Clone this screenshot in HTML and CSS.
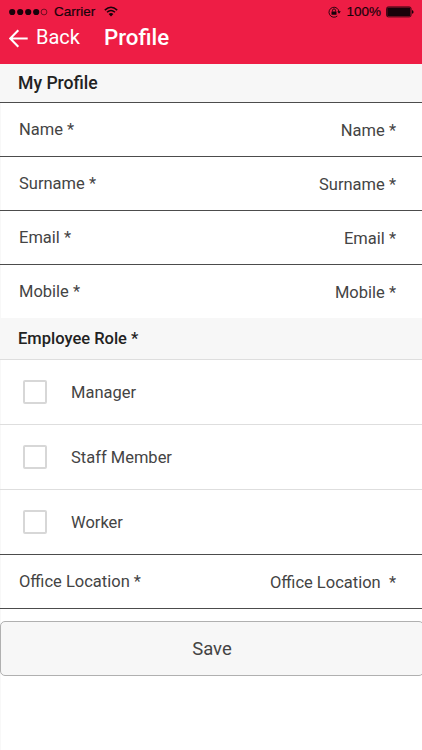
FILE: index.html
```html
<!DOCTYPE html>
<html lang="en">
<head>
<meta charset="utf-8">
<title>Profile</title>
<link rel="stylesheet" href="styles.css">
</head>
<body>
<main class="screen">
  <header class="header">
    <div class="status">
      <svg class="signal" width="40" height="8" viewBox="0 0 40 8"><circle cx="3.2" cy="4" r="3.1"/><circle cx="11.2" cy="4" r="3.1"/><circle cx="19.2" cy="4" r="3.1"/><circle cx="27.2" cy="4" r="3.1"/><circle class="signal-empty" cx="35" cy="4" r="2.9"/></svg>
      <span class="carrier">Carrier</span>
      <svg class="wifi" width="14" height="11" viewBox="0 0 14 11"><path d="M.8 4.1Q7-1.5 13.2 4.1M3 6.3Q7 2.8 11 6.3"/><path class="wifi-dot" d="M4.6 7.9Q7 5.9 9.4 7.9L7 10.4Z"/></svg>
      <svg class="lock" width="13" height="12" viewBox="0 0 13 12"><path class="lock-ring" d="M9.3 10A5 5 0 1 1 11 6"/><path d="M9.3 5.2h3.5L11 7.8zM3.5 5.4h5v3.4h-5z"/><path class="lock-ring" d="M4.5 5.5V4.4a1.5 1.5 0 0 1 3 0v1.1"/></svg>
      <span class="percent">100%</span>
      <svg class="battery" width="28" height="12" viewBox="0 0 28 12"><rect class="battery-case" x=".5" y=".9" width="24.6" height="10" rx="1.8"/><rect x="1.2" y="1.6" width="23.2" height="8.6" rx=".8"/><path d="M26 4q1.6.4 1.6 1.9T26 7.8z"/></svg>
    </div>
    <nav class="nav">
      <svg class="arrow" width="19" height="19" viewBox="0 0 19 19"><path d="M18.7 9.5H1.5M9.3 1.2L1.2 9.5l8.1 8.3"/></svg>
      <span class="back">Back</span>
      <h1 class="title">Profile</h1>
    </nav>
  </header>
  <h2 class="section section-profile">My Profile</h2>
  <div class="field"><span>Name *</span><span class="value">Name *</span></div>
  <div class="field"><span>Surname *</span><span class="value">Surname *</span></div>
  <div class="field"><span>Email *</span><span class="value">Email *</span></div>
  <div class="field field-last"><span>Mobile *</span><span class="value">Mobile *</span></div>
  <h2 class="section section-role">Employee Role *</h2>
  <div class="option"><span class="box"></span><span>Manager</span></div>
  <div class="option"><span class="box"></span><span>Staff Member</span></div>
  <div class="option option-last"><span class="box"></span><span>Worker</span></div>
  <div class="field"><span>Office Location *</span><span class="value">Office Location&nbsp; *</span></div>
  <button class="save" type="button">Save</button>
</main>
</body>
</html>
```
FILE: styles.css
```css
* { box-sizing: border-box; }
body { margin: 0; background: #fff; font-family: Roboto, sans-serif; color: #444; }
.screen { width: 422px; height: 750px; overflow: hidden; font-size: 16.5px; background: linear-gradient(to right, #f8f8f8 1px, #fff 1px); }
.header { height: 64px; background: #ee1d45; }
.status { display: flex; align-items: center; height: 23px; padding: 0 9px; color: #18020a; font: 13.5px/23px "Liberation Sans", sans-serif; -webkit-text-stroke: .2px #18020a; }
.status svg { flex: none; fill: #18020a; }
.signal .signal-empty { fill: none; stroke: #18020a; stroke-width: .6; }
.carrier { margin-left: 5px; }
.wifi { margin-left: 9px; }
.wifi path { fill: none; stroke: #18020a; stroke-width: 1.5; }
.wifi .wifi-dot { fill: #18020a; stroke: none; }
.lock { margin-left: auto; }
.lock .lock-ring { fill: none; stroke: #18020a; stroke-width: .9; }
.percent { margin: 0 5px 0 5px; }
.battery { margin-right: -1px; }
.battery .battery-case { fill: none; stroke: #18020a; stroke-width: .8; }
.nav { display: flex; align-items: center; height: 30px; padding-left: 9px; color: #fff; }
.arrow { fill: none; stroke: #fff; stroke-width: 2.1; }
.back { margin-left: 8px; padding-bottom: 2px; font-size: 20px; }
.title { margin: 0 0 0 24px; padding-bottom: 2px; font-size: 22.3px; font-weight: 500; }
.section { display: flex; align-items: center; margin: 0; padding-left: 18px; background: #f7f7f7; color: #222; font-size: 17.6px; font-weight: 500; }
.section-profile { height: 39px; padding-bottom: 1px; border-bottom: 1px solid #4c4c4c; }
.section-role { height: 42px; font-size: 16.5px; border-bottom: 1px solid #dedede; }
.field { display: flex; align-items: center; justify-content: space-between; height: 54px; padding: 0 26px 0 19px; border-bottom: 1px solid #4c4c4c; }
.value { padding-top: 2px; }
.field-last { height: 53px; padding-bottom: 1px; border-bottom: 0; }
.option { display: flex; align-items: center; height: 65px; padding-left: 22.5px; border-bottom: 1px solid #dedede; }
.option-last { border-color: #4c4c4c; }
.box { width: 24px; height: 24px; margin-right: 24.5px; border: 2px solid #d7d7d7; border-radius: 2px; }
.save { display: block; width: 424px; height: 55px; margin: 12px 0 0; padding: 0; border: 1px solid #b0b0b0; border-radius: 5px; background: #f7f7f7; color: #444; font: 18.5px Roboto, sans-serif; }
```
